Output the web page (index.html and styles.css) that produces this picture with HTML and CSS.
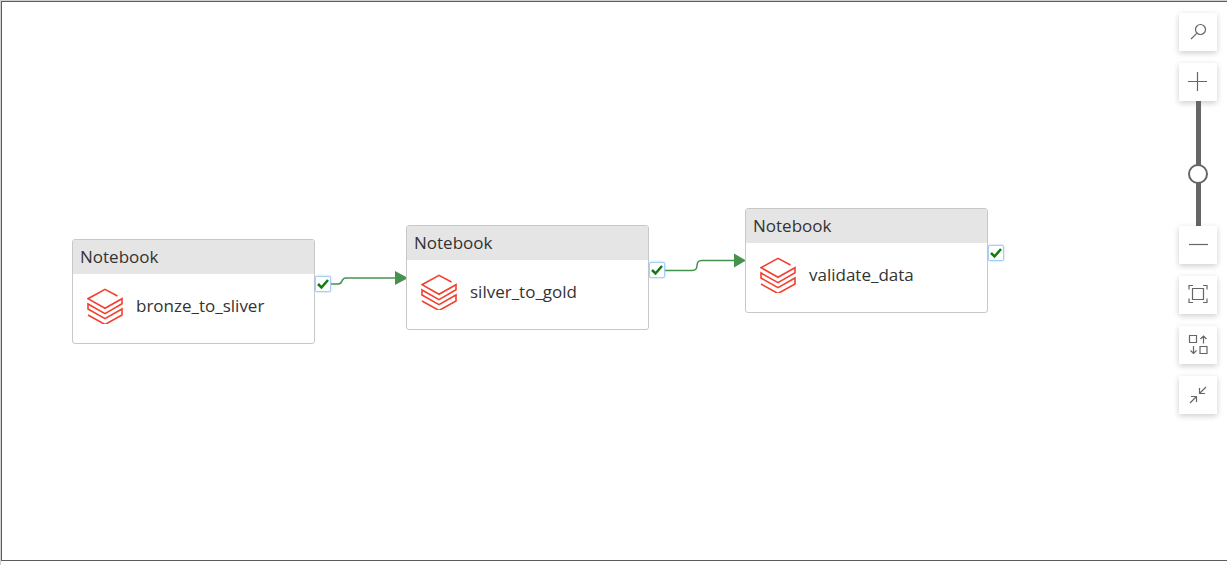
FILE: index.html
```html
<!DOCTYPE html>
<html lang="en">
<head>
<meta charset="utf-8">
<title>Pipeline canvas</title>
<link rel="stylesheet" href="styles.css">
</head>
<body>
<svg class="defs" aria-hidden="true">
  <symbol id="stack" viewBox="0 0 36 36"><path d="M30.5 8 18 1.300 1 10.700 18 20.300 35 10.700V15.700L18 25.700 1 16V21L18 30.700 35 21V27L18 36.500 1 27"/></symbol>
  <symbol id="check" viewBox="0 0 12 12"><path d="M1 6 4.500 9.500 11 2"/></symbol>
</svg>
<main class="canvas">
  <svg class="links" aria-hidden="true">
    <path class="wire" d="M329 283h8c6 0 2-6 8-6h50"/>
    <path class="arrow" d="M394 270l13 7-13 7z"/>
    <path class="wire" d="M664 269.500h27c9 0 1-10 10-10h34"/>
    <path class="arrow" d="M733 252.500l12 7-12 7z"/>
  </svg>
  <article class="node node-bronze">
    <h2 class="node-type">Notebook</h2>
    <div class="node-body"><svg class="logo"><use href="#stack"/></svg><span>bronze_to_sliver</span></div>
    <button class="port" aria-label="On success"><svg><use href="#check"/></svg></button>
  </article>
  <article class="node node-silver">
    <h2 class="node-type">Notebook</h2>
    <div class="node-body"><svg class="logo"><use href="#stack"/></svg><span>silver_to_gold</span></div>
    <button class="port" aria-label="On success"><svg><use href="#check"/></svg></button>
  </article>
  <article class="node node-validate">
    <h2 class="node-type">Notebook</h2>
    <div class="node-body"><svg class="logo"><use href="#stack"/></svg><span>validate_data</span></div>
    <button class="port" aria-label="On success"><svg><use href="#check"/></svg></button>
  </article>
  <div class="tools">
    <button class="tool" aria-label="Search"><svg viewBox="0 0 20 20"><circle cx="12.500" cy="7.500" r="5"/><path d="M8.700 11.300 3 17"/></svg></button>
    <div class="zoom">
      <button class="tool" aria-label="Zoom in"><svg viewBox="0 0 20 20"><path d="M9.500 0v19M0 9.500h19"/></svg></button>
      <input class="zoom-level" type="range" min="0" max="100" value="40" aria-label="Zoom level">
      <button class="tool" aria-label="Zoom out"><svg viewBox="0 0 20 20"><path d="M1 9.500h19"/></svg></button>
    </div>
    <button class="tool" aria-label="Zoom to fit"><svg viewBox="0 0 20 20"><path d="M4.500 3.500h11v11h-11zM1 4.500v-4h4M15 .5h4v4M19 13.500v4h-4M5 17.500H1v-4"/></svg></button>
    <button class="tool" aria-label="Auto align"><svg viewBox="0 0 20 20"><path d="M1.500 .5h7v7h-7zM12 11.500h7v7h-7zM15.500 8.500V1M12.500 4l3-3 3 3M5.500 11v7.500M2.500 15.500l3 3 3-3"/></svg></button>
    <button class="tool" aria-label="Collapse"><svg viewBox="0 0 20 20"><path d="M18 2 12 8M11.500 3v5.500H17M2 18l6-6M3 11.500h5.500V17"/></svg></button>
  </div>
</main>
</body>
</html>
```
FILE: styles.css
```css
* { box-sizing: border-box; }
body {
  margin: 0;
  padding: 1px 0 4px 1px;
  height: 100vh;
  background: linear-gradient(#d0d0d0, #d0d0d0) left / 1px 100% no-repeat,
    linear-gradient(#d0d0d0, #d0d0d0) top / 100% 1px no-repeat, #fff;
  font-family: "Open Sans", "Noto Sans", sans-serif;
  font-size: 17px;
  color: #333;
}
.defs { position: absolute; width: 0; height: 0; }
.canvas {
  position: relative;
  display: flex;
  justify-content: flex-end;
  height: 100%;
  border: 1px solid #5c5c5c;
  border-right: 0;
  background: #fff;
  overflow: hidden;
}
.links { position: absolute; left: -1px; top: -1px; width: 100%; height: 100%; }
.wire { fill: none; stroke: #47914f; stroke-width: 1.5; }
.arrow { fill: #47914f; }

.node {
  position: absolute;
  width: 243px;
  background: #fff;
  border: 1px solid #c8c8c8;
  border-radius: 3px;
}
.node-bronze { left: 70px; top: 237px; }
.node-silver { left: 404px; top: 223px; }
.node-validate { left: 743px; top: 206px; }
.node-type {
  margin: 0;
  padding: 0 7px;
  font-size: 17px;
  font-weight: 400;
  line-height: 34px;
  background: #e5e5e5;
  border-radius: 2px 2px 0 0;
}
.node-body { display: flex; align-items: flex-start; gap: 13px; padding: 14px 14px 19px; line-height: 35px; }
.logo { width: 36px; height: 36px; fill: none; stroke: #f4402f; stroke-width: 1.6; }
.port {
  position: absolute;
  left: 242px;
  top: 36px;
  display: flex;
  width: 16px;
  height: 16px;
  padding: 1px;
  background: #fff;
  border: 1px solid #a6d0f6;
  border-radius: 2px;
  box-shadow: 0 0 2px #8fc3f2;
}
.port svg { width: 12px; height: 12px; fill: none; stroke: #107c10; stroke-width: 2.5; }

.tools { display: flex; flex-direction: column; gap: 12px; padding: 11px 10px; }
.zoom { display: flex; flex-direction: column; align-items: center; }
.tool {
  display: flex;
  align-items: center;
  justify-content: center;
  width: 38px;
  height: 38px;
  padding: 0;
  border: 0;
  background: #fff;
  box-shadow: 0 2px 6px rgba(0, 0, 0, 0.2);
}
.tool svg { width: 20px; height: 20px; fill: none; stroke: #666; stroke-width: 1.2; }
.zoom-level {
  appearance: none;
  writing-mode: vertical-lr;
  direction: rtl;
  width: 20px;
  height: 125px;
  margin: 0;
  background: linear-gradient(#666, #666) center / 5px 100% no-repeat;
}
.zoom-level::-webkit-slider-thumb {
  appearance: none;
  width: 20px;
  height: 20px;
  background: #fff;
  border: 2px solid #666;
  border-radius: 50%;
}
```
